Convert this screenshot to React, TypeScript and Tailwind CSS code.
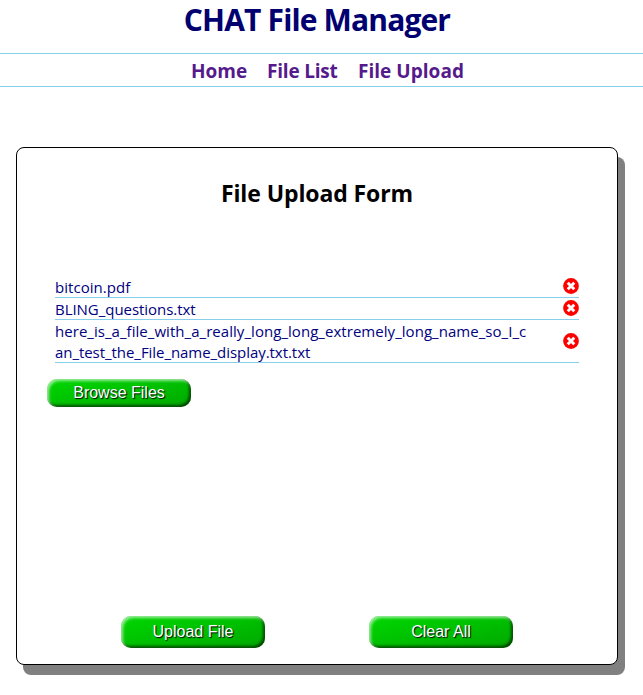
import React from "react";

const buttonStyle =
  "w-36 rounded-[10px] bg-linear-to-br from-[#00d800] to-[#00a800] text-center font-['Liberation_Sans',Arial,sans-serif] text-base text-white [text-shadow:1px_1px_1px_#000] shadow-[inset_2px_2px_3px_rgba(255,255,255,0.6),inset_-2px_-2px_3px_rgba(0,0,0,0.6)]";

function RemoveIcon() {
  return (
    <svg viewBox="0 0 16 16" className="mb-px size-4">
      <circle cx="8" cy="8" r="7.9" fill="#ff0000" />
      <path d="M4.75 4.75l6.5 6.5M11.25 4.75l-6.5 6.5" stroke="#fff" strokeWidth="2.9" />
    </svg>
  );
}

function FileRow({ children }: { children: React.ReactNode }) {
  return (
    <li className="flex items-center justify-between border-b border-[#87ceeb]">
      <span className="-mb-px pt-px text-[15px] leading-[21px] whitespace-nowrap">{children}</span>
      <RemoveIcon />
    </li>
  );
}

export default function App() {
  return (
    <div className="h-[695px] w-[643px] overflow-hidden bg-white font-['Open_Sans','Noto_Sans',sans-serif] text-[#000080]">
      <header>
        <h1 className="flex h-[53px] justify-center pr-[9px] text-[30px] leading-10 font-bold tracking-[-0.85px] text-[#000070]">
          <span>CHAT File Manager</span>
        </h1>
        <nav className="flex h-[34px] border-y border-[#87ceeb] pl-[191px] text-[19px] leading-[34px] font-bold whitespace-nowrap text-[#551a8b]">
          <a className="w-[76px]">Home</a>
          <a className="w-[91px] tracking-[-0.2px]">File List</a>
          <a className="tracking-[0.03px]">File Upload</a>
        </nav>
      </header>
      <main className="mt-[60px] ml-4 flex h-[518px] w-[602px] flex-col rounded-lg border border-black bg-white shadow-[7px_10px_0_#808080]">
        <h2 className="mt-[29px] h-[99px] text-center text-[23px] leading-8 font-bold tracking-[-0.1px] text-black">
          File Upload Form
        </h2>
        <ul className="mx-[38px] w-[524px]">
          <FileRow><span className="tracking-[0.05px]">bitcoin.pdf</span></FileRow>
          <FileRow><span className="tracking-[-0.04px]">BLING_questions.txt</span></FileRow>
          <FileRow>
            <span className="tracking-[0.045px]">here_is_a_file_with_a_really_long_long_extremely_long_name_so_I_c</span>
            <br />
            <span className="tracking-[-0.05px]">an_test_the_File_name_display.txt.txt</span>
          </FileRow>
        </ul>
        <button className={`${buttonStyle} mt-4 ml-[30px] h-7`}>Browse Files</button>
        <div className="mt-auto mb-4 ml-[104px] flex gap-[104px]">
          <button className={`${buttonStyle} h-8`}>Upload File</button>
          <button className={`${buttonStyle} h-8`}>Clear All</button>
        </div>
      </main>
    </div>
  );
}
